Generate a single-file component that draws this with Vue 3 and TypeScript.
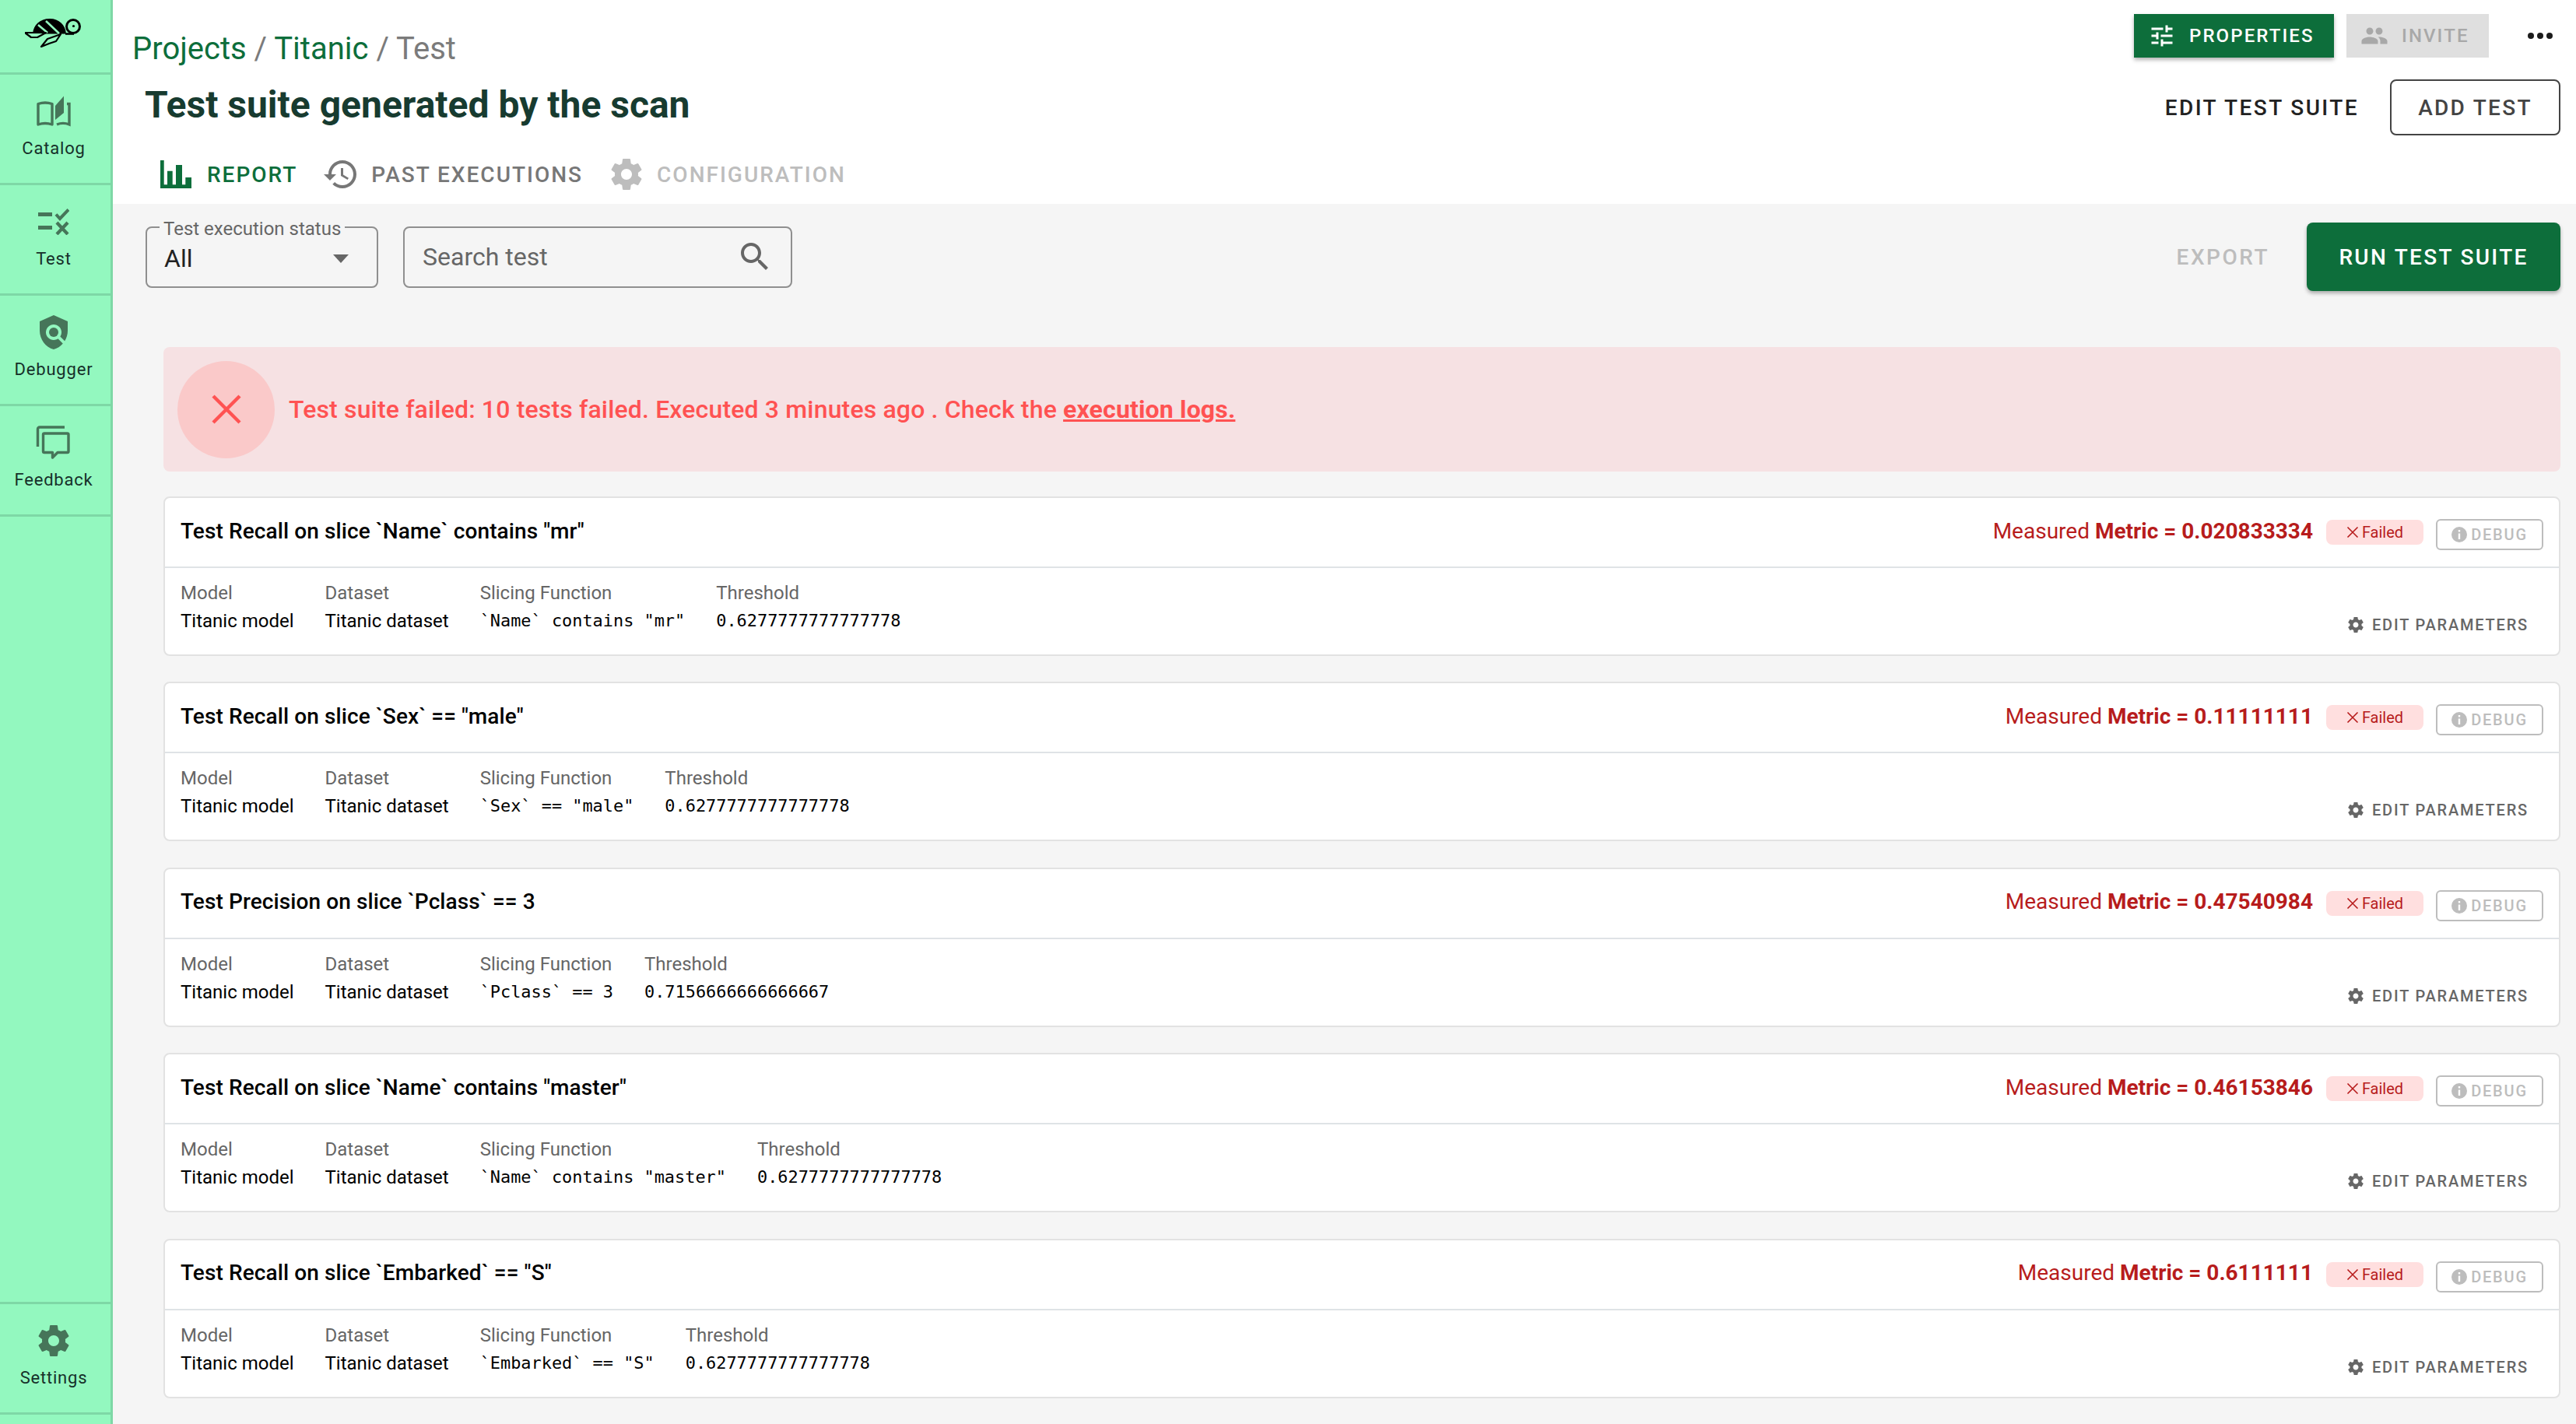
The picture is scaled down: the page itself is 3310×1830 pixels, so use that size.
<script setup lang="ts">
interface TestRow {
  title: string;
  metric: string;
  slice: string;
  threshold: string;
}

const navItems = [
  { label: "Catalog", icon: "catalog" },
  { label: "Test", icon: "test" },
  { label: "Debugger", icon: "debugger" },
  { label: "Feedback", icon: "feedback" },
];

const tests: TestRow[] = [
  { title: 'Test Recall on slice `Name` contains "mr"', metric: "0.020833334", slice: '`Name` contains "mr"', threshold: "0.6277777777777778" },
  { title: 'Test Recall on slice `Sex` == "male"', metric: "0.11111111", slice: '`Sex` == "male"', threshold: "0.6277777777777778" },
  { title: "Test Precision on slice `Pclass` == 3", metric: "0.47540984", slice: "`Pclass` == 3", threshold: "0.7156666666666667" },
  { title: 'Test Recall on slice `Name` contains "master"', metric: "0.46153846", slice: '`Name` contains "master"', threshold: "0.6277777777777778" },
  { title: 'Test Recall on slice `Embarked` == "S"', metric: "0.6111111", slice: '`Embarked` == "S"', threshold: "0.6277777777777778" },
];

const gear =
  "M19.43 12.98c.04-.32.07-.64.07-.98s-.03-.66-.07-.98l2.11-1.65c.19-.15.24-.42.12-.64l-2-3.46c-.12-.22-.39-.3-.61-.22l-2.49 1c-.52-.4-1.08-.73-1.69-.98l-.38-2.65C14.46 2.18 14.25 2 14 2h-4c-.25 0-.46.18-.49.42l-.38 2.65c-.61.25-1.17.59-1.69.98l-2.49-1c-.23-.09-.49 0-.61.22l-2 3.46c-.13.22-.07.49.12.64l2.11 1.65c-.04.32-.07.65-.07.98s.03.66.07.98l-2.11 1.65c-.19.15-.24.42-.12.64l2 3.46c.12.22.39.3.61.22l2.49-1c.52.4 1.08.73 1.69.98l.38 2.65c.03.24.24.42.49.42h4c.25 0 .46-.18.49-.42l.38-2.65c.61-.25 1.17-.59 1.69-.98l2.49 1c.23.09.49 0 .61-.22l2-3.46c.12-.22.07-.49-.12-.64l-2.11-1.65zM12 15.5c-1.93 0-3.5-1.57-3.5-3.5s1.57-3.5 3.5-3.5 3.5 1.57 3.5 3.5-1.57 3.5-3.5 3.5z";
</script>

<template>
  <div class="page">
    <aside class="sidebar">
      <div class="sidebar__logo">
        <svg width="72" height="38" viewBox="33 23 72 38">
          <path d="M43 43.500C44 32 52 24 65 24c12 0 20 8 21 19.500z" fill="#000" />
          <path d="M50 32l12 10M60 27l17 16" stroke="#93f8bf" stroke-width="2.600" fill="none" />
          <circle cx="95" cy="34" r="8.500" fill="#93f8bf" stroke="#000" stroke-width="3" />
          <circle cx="95.500" cy="33.500" r="1.600" fill="#000" />
          <path d="M85 43.500h11" stroke="#000" stroke-width="2.600" />
          <path d="M33 42h27l-11 6h-8z" fill="#93f8bf" stroke="#000" stroke-width="2.200" stroke-linejoin="round" />
          <path d="M54 60l8-10 17-6-6 9-9 3z" fill="#93f8bf" stroke="#000" stroke-width="2.200" stroke-linejoin="round" />
        </svg>
      </div>
      <a v-for="item in navItems" :key="item.label" class="nav-item">
        <div class="nav-item__icon">
          <svg v-if="item.icon === 'catalog'" width="44" height="40" viewBox="0 0 44 40" fill="none" stroke="#467559" stroke-width="3.400">
            <path d="M2 37V10.500c6-2 12-2 18 0V37c-6-2-12-2-18 0z" stroke-linejoin="round" />
            <path d="M26 37c5-2 11-2 16 0V10.500h-3" />
            <path d="M24 31V13L35 .5V22z" fill="#467559" stroke="none" />
          </svg>
          <svg v-else-if="item.icon === 'test'" width="40" height="34" viewBox="0 0 40 34" fill="none" stroke="#467559">
            <path d="M0 7.500h18M0 24.500h18" stroke-width="5" />
            <path d="M23 7.500l5 5.500L39 1.500" stroke-width="4" />
            <path d="M24 18l14 15M38 18L24 33" stroke-width="4.200" />
          </svg>
          <svg v-else-if="item.icon === 'debugger'" width="48" height="48" viewBox="0 0 24 24" fill="#467559">
            <path d="M21 5l-9-4-9 4v6c0 5.550 3.840 10.740 9 12 2.300-.56 4.330-1.900 5.880-3.710l-3.120-3.120c-1.940 1.290-4.580 1.070-6.290-.64-1.950-1.950-1.950-5.120 0-7.070 1.950-1.950 5.120-1.950 7.070 0 1.710 1.710 1.920 4.350.64 6.290l2.900 2.900C20.290 15.690 21 13.380 21 11V5z" />
            <circle cx="12" cy="12" r="3" />
          </svg>
          <svg v-else width="46" height="46" viewBox="0 0 46 46" fill="none" stroke="#467559" stroke-width="3.400">
            <path d="M2.500 28V5.500c0-1.500 1-2.500 2.500-2.500h32" />
            <path d="M11 11h29.500c1 0 1.500.5 1.500 1.500V34c0 1-.5 1.500-1.500 1.500H28L21.500 42v-6.500H11c-1 0-1.500-.5-1.500-1.500V12.500c0-1 .5-1.500 1.500-1.500z" stroke-linejoin="round" />
          </svg>
        </div>
        <span>{{ item.label }}</span>
      </a>
      <a class="nav-item nav-item--bottom">
        <div class="nav-item__icon">
          <svg width="48" height="48" viewBox="0 0 24 24" fill="#467559"><path :d="gear" /></svg>
        </div>
        <span>Settings</span>
      </a>
    </aside>

    <main class="main">
      <header class="header">
        <div class="topbar">
          <div class="crumbs">
            <span class="crumbs__link">Projects</span><span class="crumbs__sep"> / </span><span class="crumbs__link">Titanic</span><span class="crumbs__sep"> / Test</span>
          </div>
          <div class="topbar__actions">
            <button class="btn-top btn-top--green">
              <svg width="36" height="36" viewBox="0 0 24 24" fill="#fff"><path d="M3 17v2h6v-2H3zM3 5v2h10V5H3zm10 16v-2h8v-2h-8v-2h-2v6h2zM7 9v2H3v2h4v2h2V9H7zm14 4v-2H11v2h10zm-6-4h2V7h4V5h-4V3h-2v6z" /></svg>
              PROPERTIES
            </button>
            <button class="btn-top btn-top--off">
              <svg width="36" height="36" viewBox="0 0 24 24" fill="#a8a8a8"><path d="M16 11c1.660 0 2.990-1.340 2.990-3S17.660 5 16 5c-1.660 0-3 1.340-3 3s1.340 3 3 3zm-8 0c1.660 0 2.990-1.340 2.990-3S9.660 5 8 5C6.340 5 5 6.340 5 8s1.340 3 3 3zm0 2c-2.330 0-7 1.170-7 3.500V19h14v-2.500c0-2.330-4.670-3.500-7-3.500zm8 0c-.29 0-.62.02-.97.05 1.160.84 1.970 1.970 1.970 3.450V19h6v-2.500c0-2.330-4.670-3.500-7-3.500z" /></svg>
              INVITE
            </button>
            <div class="dots"><i /><i /><i /></div>
          </div>
        </div>
        <div class="titlebar">
          <h1>Test suite generated by the scan</h1>
          <div class="titlebar__actions">
            <button class="btn-text">EDIT TEST SUITE</button>
            <button class="btn-outline">ADD TEST</button>
          </div>
        </div>
        <nav class="tabs">
          <div class="tab tab--active">
            <svg width="40" height="36" viewBox="0 0 40 36" fill="#0d6e3b">
              <path d="M0 0h4.700v31.300H9V13.700h6.700v17.600H20V6h8v25.300h4.300V22H40v14H0z" />
            </svg>
            REPORT
          </div>
          <div class="tab">
            <svg width="48" height="48" viewBox="0 0 24 24" fill="#777"><path d="M13 3c-4.970 0-9 4.030-9 9H1l3.890 3.890.07.14L9 12H6c0-3.870 3.130-7 7-7s7 3.130 7 7-3.130 7-7 7c-1.930 0-3.680-.79-4.940-2.060l-1.420 1.420C8.270 19.990 10.510 21 13 21c4.970 0 9-4.030 9-9s-4.030-9-9-9zm-1 5v5l4.280 2.540.72-1.210-3.500-2.080V8H12z" /></svg>
            PAST EXECUTIONS
          </div>
          <div class="tab tab--off">
            <svg width="48" height="48" viewBox="0 0 24 24" fill="#bdbdbd"><path :d="gear" /></svg>
            CONFIGURATION
          </div>
        </nav>
      </header>

      <section class="content">
        <div class="toolbar">
          <div class="field field--select">
            <span class="field__legend">Test execution status</span>
            <span class="field__value">All</span>
            <i class="field__caret" />
          </div>
          <div class="field field--search">
            <span class="field__placeholder">Search test</span>
            <svg width="48" height="48" viewBox="0 0 24 24" fill="#666"><path d="M15.500 14h-.79l-.28-.27C15.410 12.590 16 11.110 16 9.500 16 5.910 13.090 3 9.500 3S3 5.910 3 9.500 5.910 16 9.500 16c1.610 0 3.090-.59 4.230-1.570l.27.28v.79l5 4.990L20.490 19l-4.990-5zm-6 0C7.010 14 5 11.990 5 9.500S7.010 5 9.500 5 14 7.010 14 9.500 11.990 14 9.500 14z" /></svg>
          </div>
          <div class="toolbar__spacer" />
          <span class="export">EXPORT</span>
          <button class="btn-run">RUN TEST SUITE</button>
        </div>

        <div class="banner">
          <div class="banner__circle">
            <svg width="48" height="48" viewBox="0 0 48 48" stroke="#ff5252" stroke-width="4.400" fill="none"><path d="M7 7l34 34M41 7L7 41" /></svg>
          </div>
          <p>Test suite failed: 10 tests failed. Executed 3 minutes ago . Check the <a>execution logs.</a></p>
        </div>

        <article v-for="t in tests" :key="t.title" class="card">
          <div class="card__head">
            <span class="card__title">{{ t.title }}</span>
            <span class="card__metric">Measured <b>Metric = {{ t.metric }}</b></span>
            <span class="badge">
              <svg width="16" height="16" viewBox="0 0 16 16" stroke="#b71c1c" stroke-width="1.600" fill="none"><path d="M1.500 1.500l13 13M14.500 1.500l-13 13" /></svg>
              Failed
            </span>
            <span class="debug">
              <svg width="20" height="20" viewBox="0 0 20 20"><circle cx="10" cy="10" r="10" fill="#bdbdbd" /><path d="M10 4v2.400M10 8.500V16" stroke="#fff" stroke-width="2.400" /></svg>
              DEBUG
            </span>
          </div>
          <div class="card__body">
            <div class="param">
              <span class="param__label">Model</span>
              <span class="param__value">Titanic model</span>
            </div>
            <div class="param">
              <span class="param__label">Dataset</span>
              <span class="param__value">Titanic dataset</span>
            </div>
            <div class="param">
              <span class="param__label">Slicing Function</span>
              <span class="param__value param__value--mono">{{ t.slice }}</span>
            </div>
            <div class="param">
              <span class="param__label">Threshold</span>
              <span class="param__value param__value--mono">{{ t.threshold }}</span>
            </div>
            <span class="edit-params">
              <svg width="24" height="24" viewBox="0 0 24 24" fill="#666"><path :d="gear" /></svg>
              EDIT PARAMETERS
            </span>
          </div>
        </article>
        <div class="card card--cut" />
      </section>
    </main>
  </div>
</template>

<style>
html,
body {
  margin: 0;
  overflow: hidden;
}
</style>

<style scoped>
.page {
  display: flex;
  width: 3310px;
  height: 1830px;
  overflow: hidden;
  font-family: Roboto, "Liberation Sans", sans-serif;
  background: #f5f5f5;
}

button {
  font-family: inherit;
  border: 0;
  cursor: pointer;
}

/* sidebar */
.sidebar {
  display: flex;
  flex-direction: column;
  flex: none;
  box-sizing: border-box;
  width: 145px;
  background: #93f8bf;
  border-right: 3px solid #7ed8a6;
}

.sidebar__logo {
  display: flex;
  align-items: flex-start;
  justify-content: center;
  box-sizing: border-box;
  height: 96px;
  padding: 23px 6px 0 0;
  border-bottom: 3px solid #7ed8a6;
}

.nav-item {
  display: flex;
  flex-direction: column;
  align-items: center;
  gap: 12px;
  box-sizing: border-box;
  height: 142px;
  padding: 23px 4px 0 0;
  border-bottom: 3px solid #7ed8a6;
  font-size: 22px;
  line-height: 24px;
  letter-spacing: 0.800px;
  color: #16302a;
}

.nav-item__icon {
  display: flex;
  align-items: center;
  justify-content: center;
  height: 48px;
}

.nav-item--bottom {
  height: 145px;
  margin-top: auto;
  margin-bottom: 12px;
  border-top: 3px solid #7ed8a6;
}

/* header */
.main {
  flex: 1;
  min-width: 0;
  display: flex;
  flex-direction: column;
}

.header {
  flex: none;
  height: 262px;
  background: #fff;
}

.topbar {
  display: flex;
  justify-content: space-between;
  box-sizing: border-box;
  height: 102px;
  padding: 18px 20px 0 25px;
}

.crumbs {
  padding-top: 21px;
  font-size: 40px;
  line-height: 47px;
  color: #7b7b7b;
}

.crumbs__link {
  color: #0d6e3b;
}

.topbar__actions {
  display: flex;
  align-items: flex-start;
}

.btn-top {
  display: flex;
  align-items: center;
  gap: 17px;
  height: 56px;
  padding: 0 0 0 18px;
  font-size: 24px;
  font-weight: 500;
  letter-spacing: 2.100px;
}

.btn-top--green {
  width: 257px;
  background: #0d6e3b;
  color: #fff;
  box-shadow: 0 3px 5px rgba(0, 0, 0, 0.3);
}

.btn-top--off {
  width: 183px;
  margin-left: 16px;
  background: #dfdfdf;
  color: #a8a8a8;
}

.dots {
  display: flex;
  gap: 4px;
  height: 56px;
  align-items: center;
  margin-left: 50px;
  margin-right: 10px;
}

.dots i {
  width: 8px;
  height: 8px;
  border-radius: 50%;
  background: #1c1c1c;
}

.titlebar {
  display: flex;
  align-items: center;
  justify-content: space-between;
  height: 72px;
  padding: 0 20px 0 41px;
}

h1 {
  margin: 0 0 8px;
  font-size: 48px;
  font-weight: 700;
  color: #173b30;
}

.titlebar__actions {
  display: flex;
  align-items: center;
  gap: 40px;
}

.btn-text {
  padding: 0;
  background: none;
  font-size: 28px;
  font-weight: 500;
  letter-spacing: 2.400px;
  color: #222;
}

.btn-outline {
  box-sizing: border-box;
  width: 219px;
  height: 72px;
  background: #fff;
  border: 2px solid #444;
  border-radius: 8px;
  font-size: 28px;
  font-weight: 500;
  letter-spacing: 2.300px;
  color: #444;
}

.tabs {
  display: flex;
  align-items: center;
  height: 88px;
  padding: 12px 0 0 61px;
  box-sizing: border-box;
}

.tab {
  display: flex;
  align-items: center;
  gap: 15px;
  margin-right: 32px;
  font-size: 28px;
  font-weight: 500;
  letter-spacing: 2px;
  color: #777;
}

.tab--active {
  gap: 20px;
  color: #0d6e3b;
}

.tab--off {
  color: #bdbdbd;
}

/* toolbar */
.content {
  flex: 1;
  min-height: 0;
  padding: 24px 20px 0 42px;
}

.toolbar {
  display: flex;
  align-items: center;
  gap: 32px;
  height: 88px;
  margin-bottom: 72px;
}

.toolbar__spacer {
  flex: 1;
}

.field {
  position: relative;
  display: flex;
  align-items: center;
  box-sizing: border-box;
  height: 79px;
  border: 2px solid #8f8f8f;
  border-radius: 8px;
}

.field--select {
  width: 299px;
  padding: 4px 22px 0;
}

.field--search {
  width: 500px;
  justify-content: space-between;
  padding: 0 22px 0 23px;
}

.field__legend {
  position: absolute;
  top: -11px;
  left: 16px;
  padding: 0 5px;
  background: #f5f5f5;
  font-size: 24px;
  line-height: 24px;
  color: #666;
}

.field__value {
  font-size: 32px;
  color: #222;
}

.field__placeholder {
  font-size: 32px;
  color: #666;
}

.field__caret {
  position: absolute;
  right: 36px;
  top: 34px;
  border: 10px solid transparent;
  border-top: 11px solid #666;
  border-bottom: 0;
}

.export {
  font-size: 28px;
  font-weight: 500;
  letter-spacing: 2.500px;
  color: #bdbdbd;
  margin-right: 16px;
}

.btn-run {
  width: 326px;
  height: 88px;
  background: #0d6e3b;
  border-radius: 8px;
  font-size: 28px;
  font-weight: 500;
  letter-spacing: 2.300px;
  color: #fff;
  box-shadow: 0 3px 5px rgba(0, 0, 0, 0.3);
}

/* banner */
.banner {
  display: flex;
  align-items: center;
  gap: 18px;
  box-sizing: border-box;
  height: 160px;
  margin: 0 0 32px 23px;
  padding-left: 18px;
  background: #f6e1e3;
  border-radius: 8px;
}

.banner__circle {
  display: flex;
  align-items: center;
  justify-content: center;
  width: 125px;
  height: 125px;
  border-radius: 50%;
  background: #fac9c9;
}

.banner p {
  margin: 0;
  font-size: 32px;
  font-weight: 500;
  letter-spacing: 0.160px;
  color: #ff5252;
}

.banner a {
  font-weight: 700;
  text-decoration: underline;
}

/* cards */
.card {
  box-sizing: border-box;
  height: 205px;
  margin: 0 0 33.400px 23px;
  background: #fff;
  border: 2px solid #e2e2e2;
  border-radius: 8px;
}

.card__head {
  display: flex;
  align-items: center;
  box-sizing: border-box;
  height: 90px;
  padding: 0 20px;
  border-bottom: 2px solid #dfe3e6;
}

.card__title {
  flex: 1;
  margin-bottom: 4px;
  font-size: 28px;
  font-weight: 500;
  letter-spacing: 0.100px;
  color: #000;
}

.card__metric {
  margin-bottom: 4px;
  font-size: 28px;
  color: #b71c1c;
}

.card__metric b {
  font-weight: 700;
}

.badge {
  display: flex;
  align-items: center;
  justify-content: center;
  gap: 4px;
  box-sizing: border-box;
  width: 125px;
  height: 32px;
  margin: 0 16px 0 17px;
  background: #ffdfdf;
  border-radius: 8px;
  font-size: 20px;
  color: #b71c1c;
}

.debug {
  display: flex;
  align-items: center;
  justify-content: center;
  gap: 5px;
  box-sizing: border-box;
  width: 138px;
  height: 40px;
  margin-top: 6px;
  border: 2px solid #bdbdbd;
  border-radius: 6px;
  font-size: 20px;
  font-weight: 500;
  letter-spacing: 1.800px;
  color: #bdbdbd;
}

.card__body {
  display: flex;
  gap: 40px;
  padding: 14px 20px 0;
}

.param {
  display: flex;
  flex-direction: column;
}

.param__label {
  font-size: 24px;
  line-height: 36px;
  color: #666;
}

.param__value {
  font-size: 24px;
  line-height: 36px;
  color: #000;
}

.param__value--mono {
  font-family: "DejaVu Sans Mono", monospace;
  font-size: 21.900px;
  white-space: pre;
}

.edit-params {
  display: flex;
  align-items: center;
  gap: 9px;
  margin: 44px 19px 0 auto;
  height: 30px;
  font-size: 20px;
  font-weight: 500;
  letter-spacing: 1.800px;
  color: #666;
}
</style>
